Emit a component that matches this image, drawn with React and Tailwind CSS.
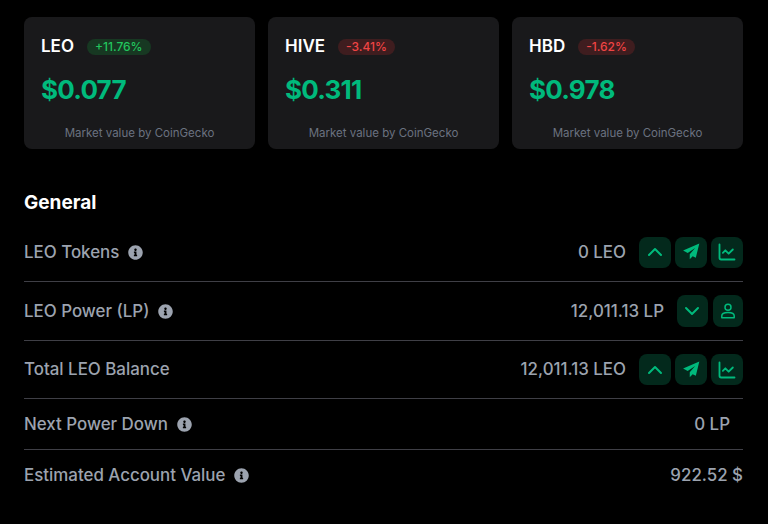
import React from "react";
import { ChevronUp, ChevronDown, ChartLine } from "lucide-react";
import { FaInfoCircle } from "react-icons/fa";

const Send = () => (
  <svg viewBox="0 0 24 24" className="w-[20px] h-[20px] -translate-y-[1px]" fill="currentColor">
    <path d="M22 3 2.5 11.5 8 14.5 17 8.5 10.5 16v6l3.5-3.7 3.8 1.7z" />
  </svg>
);

const User = () => (
  <svg viewBox="0 0 16 16" className="w-[16px] h-[16px]" fill="none" stroke="currentColor" strokeWidth="1.5">
    <circle cx="8" cy="4.2" r="3" />
    <path d="M1.8 12.8c0-2.2 2.6-3.3 6.2-3.3s6.2 1.1 6.2 3.3v1.9H1.8z" strokeLinejoin="round" />
  </svg>
);

const IconButton = ({ children, narrow }) => (
  <button
    className={`flex items-center justify-center rounded-lg bg-[#03291c] text-[#00ba7c] ${
      narrow ? "w-[30.5px] h-[32px]" : "w-[32px] h-[31px]"
    }`}
  >
    {children}
  </button>
);

const PriceCard = ({ name, change, up, price }) => (
  <div className="flex flex-col h-[132px] rounded-lg bg-[#19191b] px-[17px] pt-[20px] pb-[7px]">
    <div className="flex items-center gap-[13px] h-[19px]">
      <span className="text-white text-[17px] font-semibold">{name}</span>
      <span
        className={`px-[8px] h-[16px] flex items-center rounded-full text-[12px] font-medium ${
          up ? "bg-[#173822] text-[#22c55e]" : "bg-[#3f1d1f] text-[#ef4444]"
        }`}
      >
        {change}
      </span>
    </div>
    <div className="mt-[17px] text-[#00ba7c] text-[26px] leading-[34px] font-bold tracking-[-0.03em]">{price}</div>
    <div className="mt-auto text-center text-[11.5px] leading-[18px] text-[#6b7280]">
      Market value by CoinGecko
    </div>
  </div>
);

const rows = [
  { label: "LEO Tokens", value: "0 LEO", buttons: "full", h: "h-[59px]" },
  { label: "LEO Power (LP)", value: "12,011.13 LP", buttons: "power", h: "h-[59px]" },
  { label: "Total LEO Balance", value: "12,011.13 LEO", buttons: "full", noInfo: true, h: "h-[58px]" },
  { label: "Next Power Down", value: "0 LP", pad: true, h: "h-[51px]" },
  { label: "Estimated Account Value", value: "922.52 $", h: "h-[50px]", last: true },
];

const Row = ({ label, value, buttons, noInfo, pad, h, last }) => (
  <div className={`flex items-center justify-between ${h} ${last ? "" : "border-b border-[#3f3f46]"}`}>
    <div className="flex items-center gap-[9px] text-[16.9px] leading-[25px] font-medium text-[#9ca3af]">
      <span>{label}</span>
      {!noInfo && <FaInfoCircle size={15} />}
    </div>
    <div className={`flex items-center gap-[13px] text-[16.9px] leading-[25px] font-medium text-[#9ca3af] ${pad ? "pr-[13px]" : ""}`}>
      <span>{value}</span>
      {buttons === "full" && (
        <div className="flex gap-[4px]">
          <IconButton><ChevronUp size={24} strokeWidth={2} /></IconButton>
          <IconButton><Send /></IconButton>
          <IconButton><ChartLine size={20} strokeWidth={2.2} /></IconButton>
        </div>
      )}
      {buttons === "power" && (
        <div className="flex gap-[5px]">
          <IconButton narrow><ChevronDown size={24} strokeWidth={2} /></IconButton>
          <IconButton narrow><User /></IconButton>
        </div>
      )}
    </div>
  </div>
);

export default function App() {
  return (
    <div className="min-h-[524px] bg-black pl-6 pr-[25px] pt-[17px] font-['Inter',sans-serif]">
      <div className="grid grid-cols-3 gap-[13px]">
        <PriceCard name="LEO" change="+11.76%" up price="$0.077" />
        <PriceCard name="HIVE" change="-3.41%" price="$0.311" />
        <PriceCard name="HBD" change="-1.62%" price="$0.978" />
      </div>
      <h2 className="mt-[40px] text-white text-[19px] leading-[28px] font-bold">General</h2>
      <div className="mt-[6px]">
        {rows.map((row) => (
          <Row key={row.label} {...row} />
        ))}
      </div>
    </div>
  );
}
